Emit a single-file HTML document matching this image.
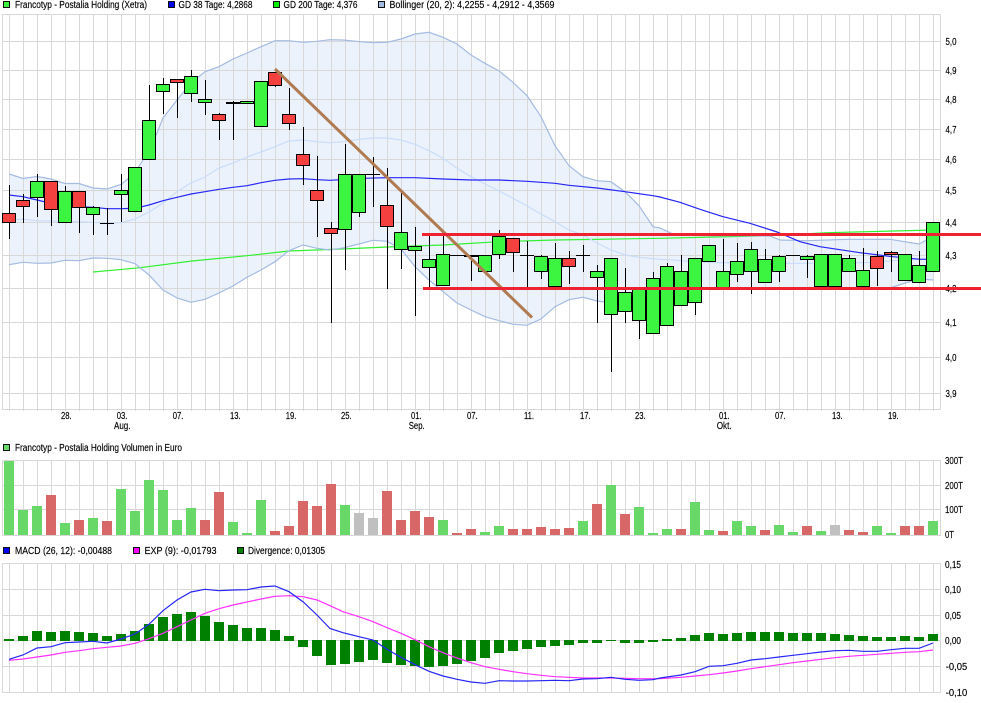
<!DOCTYPE html>
<html><head><meta charset="utf-8"><title>Chart</title>
<style>
html,body{margin:0;padding:0;background:#fff}
svg{display:block}
text{font-family:"Liberation Sans",sans-serif;font-size:10px;fill:#000;stroke:#000;stroke-width:.15px}
</style></head><body>
<svg width="981" height="703" viewBox="0 0 981 703" xmlns="http://www.w3.org/2000/svg">
<defs><pattern id="v" x="9" y="0" width="14" height="10" patternUnits="userSpaceOnUse"><rect width="1" height="10" fill="#d8d8d8"/></pattern></defs>
<rect width="981" height="703" fill="#fff"/>

<!-- Bollinger fill -->
<path fill="#cfdff8" fill-opacity=".42" d="M9 174L23 178.5 37 176.5 51 179 65 183.5 79 183.5 93 188 107 189 121 184.5 135 173 149 150 157 133 163 118 177 100 191 83 205 71.7 219 66.7 233 59 247 53 261 46.7 275 40.7 289 40.7 303 42.3 317 41.3 330 39.7 343 40 360 41.7 373 42.7 387 42.3 401 39 415 34 429 32.3 443 37.3 457 44 471 55 485 63.3 499 71 513 82.3 527 95.7 541 116.7 555 145.7 569 165.7 583 176.7 597 180.7 611 181.7 625 191.7 639 205.7 653 226.7 660 228 673 234 700 235.5 770 236 780 240 807 240.7 848 239.3 890 239.3 919 244 933 236.7L933 280 919 279 905 283 890 288 681 288 667 290 653 292 639 298 625 302 611 303 597 301 583 297.3 569 299.7 555 306.7 541 319 527 325.3 513 324.3 499 320.7 485 316.7 471 310 457 303 443 291.7 429 280 415 266.7 401 249 387 241.3 373 240.3 359 244 343 248 330 250 317 248.3 303 245 289 250.7 275 261.7 261 270 247 277.3 233 286 219 293 205 299.3 191 302.3 177 298 163 290 149 275 135 263.7 121 259.7 107 258.3 93 258 79 260.7 65 260.3 51 263 37 263.3 23 262.3 9 264.7Z"/>

<!-- grids -->
<g fill="url(#v)">
<rect x="9" y="14" width="925" height="397"/>
<rect x="9" y="460" width="925" height="75"/>
<rect x="9" y="563" width="925" height="129"/>
</g>
<path stroke="#d8d8d8" fill="none" shape-rendering="crispEdges" d="M2.5 14V410M940.5 14V410M2 14.5H941M2 41.5H941M2 70.5H941M2 99.5H941M2 129.5H941M2 159.5H941M2 190.5H941M2 222.5H941M2 255.5H941M2 288.5H941M2 322.5H941M2 357.5H941M2 393.5H941M2 409.5H941
M2.5 460V535M940.5 460V535M2 460.5H941M2 485.5H941M2 509.5H941M2 535.5H941
M2.5 563V693M940.5 563V693M2 563.5H941M2 589.5H941M2 615.5H941M2 640.5H941M2 666.5H941M2 692.5H941"/>

<!-- GD200 -->
<polyline fill="none" stroke="#30f030" stroke-width="1.2" points="93,272 140,267.7 192,261 247,255.7 289,251 330,249.5 387,247 443,245 499,241.7 555,240 660,238.3 770,235.7 827,232.7 933,230"/>
<!-- Bollinger lines -->
<polyline fill="none" stroke="#a4bbe2" stroke-width="1.2" points="9,174 23,178.5 37,176.5 51,179 65,183.5 79,183.5 93,188 107,189 121,184.5 135,173 149,150 157,133 163,118 177,100 191,83 205,71.7 219,66.7 233,59 247,53 261,46.7 275,40.7 289,40.7 303,42.3 317,41.3 330,39.7 343,40 360,41.7 373,42.7 387,42.3 401,39 415,34 429,32.3 443,37.3 457,44 471,55 485,63.3 499,71 513,82.3 527,95.7 541,116.7 555,145.7 569,165.7 583,176.7 597,180.7 611,181.7 625,191.7 639,205.7 653,226.7 660,228 673,234 700,235.5 770,236 780,240 807,240.7 848,239.3 890,239.3 919,244 933,236.7"/>
<polyline fill="none" stroke="#a4bbe2" stroke-width="1.2" points="9,264.7 23,262.3 37,263.3 51,263 65,260.3 79,260.7 93,258 107,258.3 121,259.7 135,263.7 149,275 163,290 177,298 191,302.3 205,299.3 219,293 233,286 247,277.3 261,270 275,261.7 289,250.7 303,245 317,248.3 330,250 343,248 359,244 373,240.3 387,241.3 401,249 415,266.7 429,280 443,291.7 457,303 471,310 485,316.7 499,320.7 513,324.3 527,325.3 541,319 555,306.7 569,299.7 583,297.3 597,301 611,303 625,302 639,298 653,292 667,290 681,288 890,288 905,283 919,279 933,280"/>
<polyline fill="none" stroke="#c9dcf9" stroke-width="1.2" points="9,219.7 23,219.3 37,220.7 51,221 65,221.7 79,221.7 93,222.3 107,223 121,222.7 135,219 149,212 163,203 177,191.7 191,183 205,177 219,168 233,163 247,157 261,152 275,146.7 289,141 303,140 317,141.7 330,142.7 343,141.7 360,139.3 373,138 387,138 401,140 415,144.3 429,150.7 443,158.3 457,168.3 471,176.7 485,184 499,191 513,198.3 527,206 541,214 555,221.7 569,230 583,235 597,243 611,250 625,255 639,257.3 660,259.3 673,260 693,261.7 723,262.7 753,263.3 793,263.3 827,263.3 877,262.3 900,260 923,259 933,259"/>
<!-- GD38 -->
<polyline fill="none" stroke="#2626f5" stroke-width="1.2" points="9,195 23,196.7 37,200 51,203.3 65,205 79,206.7 93,207.3 107,208.7 121,208.7 135,208.3 149,205 163,200.7 177,197.3 191,194 205,191.7 219,189.3 233,187.3 247,185.7 261,182.7 275,180.3 289,179 303,178.7 317,179.7 330,180.3 363,178.3 387,177.7 415,177.7 443,179 471,180 499,180 527,181.3 555,183.3 569,185.3 597,188 625,191.7 653,195.7 660,197 680,202.3 700,209.3 723,216.7 750,223.3 777,232 800,241.7 820,246.7 860,252.7 893,256.7 920,259.3 933,259.3"/>

<!-- wicks -->
<path stroke="#000" fill="none" shape-rendering="crispEdges" d="M9.5 185V239M23.5 194V223M37.5 174V217M51.5 181V226M65.5 186V222M79.5 191V233M93.5 206V235M107.5 208V235M121.5 174V222M149.5 85V159M163.5 78V114M177.5 79V118M191.5 70V102M205.5 80V115M219.5 113V140M233.5 101V140M275.5 72V87M289.5 88V130M303.5 127V185M317.5 156V237M331.5 222V323M345.5 144V270M359.5 174V217M373.5 157V207M387.5 168V289M401.5 193V269M415.5 227V316M429.5 236V288M443.5 236V254M471.5 256V281M499.5 230V259M513.5 238V272M527.5 241V287M541.5 255V279M555.5 243V258M569.5 251V284M583.5 245V272M597.5 265V323M611.5 258V372M625.5 268V323M639.5 288V339M653.5 272V278M667.5 263V270M681.5 255V271M695.5 258V315M723.5 239V271M737.5 243V282M751.5 242V294M765.5 249V260M779.5 255V282M807.5 255V278M849.5 255V258M863.5 248V270M877.5 251V286M891.5 251V272M919.5 251V265"/>
<!-- dojis -->
<path stroke="#000" fill="none" shape-rendering="crispEdges" d="M100 223.5h14M366 174.5h14M450 255.5h14M520 255.5h14M576 255.5h14M786 255.5h14"/>
<rect x="226" y="102" width="14" height="2" fill="#000"/>
<!-- green bodies -->
<path fill="#3cf540" stroke="#000" shape-rendering="crispEdges" d="M30.5 181.5h13v16h-13zM58.5 191.5h13v31h-13zM86.5 207.5h13v7h-13zM114.5 190.5h13v4h-13zM128.5 167.5h13v44h-13zM142.5 120.5h13v39h-13zM156.5 84.5h13v7h-13zM184.5 76.5h13v17h-13zM198.5 99.5h13v3h-13zM240.5 101.5h13v2h-13zM254.5 81.5h13v45h-13zM338.5 174.5h13v55h-13zM352.5 174.5h13v38h-13zM394.5 232.5h13v17h-13zM408.5 246.5h13v4h-13zM422.5 259.5h13v8h-13zM436.5 254.5h13v31h-13zM464.5 255.5h13v1h-13zM478.5 255.5h13v16h-13zM492.5 236.5h13v18h-13zM534.5 256.5h13v15h-13zM548.5 258.5h13v28h-13zM590.5 271.5h13v6h-13zM604.5 258.5h13v56h-13zM618.5 292.5h13v19h-13zM632.5 287.5h13v33h-13zM646.5 278.5h13v55h-13zM660.5 266.5h13v59h-13zM674.5 271.5h13v34h-13zM688.5 258.5h13v44h-13zM702.5 245.5h13v16h-13zM716.5 271.5h13v17h-13zM730.5 261.5h13v13h-13zM744.5 249.5h13v22h-13zM758.5 259.5h13v23h-13zM772.5 256.5h13v15h-13zM800.5 256.5h13v3h-13zM814.5 254.5h13v32h-13zM828.5 254.5h13v32h-13zM842.5 258.5h13v13h-13zM856.5 270.5h13v16h-13zM898.5 254.5h13v26h-13zM912.5 265.5h13v17h-13zM926.5 222.5h13v49h-13z"/>
<!-- red bodies -->
<path fill="#f54040" stroke="#000" shape-rendering="crispEdges" d="M2.5 213.5h13v9h-13zM16.5 200.5h13v6h-13zM44.5 181.5h13v28h-13zM72.5 191.5h13v16h-13zM170.5 79.5h13v3h-13zM212.5 114.5h13v6h-13zM268.5 72.5h13v13h-13zM282.5 114.5h13v9h-13zM296.5 154.5h13v11h-13zM310.5 190.5h13v10h-13zM324.5 228.5h13v5h-13zM380.5 205.5h13v21h-13zM506.5 238.5h13v14h-13zM562.5 258.5h13v8h-13zM870.5 256.5h13v12h-13zM884.5 252.5h13v2h-13z"/>

<!-- axis labels -->
<g lengthAdjust="spacingAndGlyphs">
<text x="945.5" y="45" textLength="11" lengthAdjust="spacingAndGlyphs">5,0</text><text x="945.5" y="74" textLength="11" lengthAdjust="spacingAndGlyphs">4,9</text><text x="945.5" y="103" textLength="11" lengthAdjust="spacingAndGlyphs">4,8</text><text x="945.5" y="133" textLength="11" lengthAdjust="spacingAndGlyphs">4,7</text><text x="945.5" y="163" textLength="11" lengthAdjust="spacingAndGlyphs">4,6</text><text x="945.5" y="194" textLength="11" lengthAdjust="spacingAndGlyphs">4,5</text><text x="945.5" y="226" textLength="11" lengthAdjust="spacingAndGlyphs">4,4</text><text x="945.5" y="259" textLength="11" lengthAdjust="spacingAndGlyphs">4,3</text><text x="945.5" y="292" textLength="11" lengthAdjust="spacingAndGlyphs">4,2</text><text x="945.5" y="326" textLength="11" lengthAdjust="spacingAndGlyphs">4,1</text><text x="945.5" y="361" textLength="11" lengthAdjust="spacingAndGlyphs">4,0</text><text x="945.5" y="397" textLength="11" lengthAdjust="spacingAndGlyphs">3,9</text>
</g>

<!-- trend lines -->
<line x1="275" y1="69" x2="532" y2="317.5" stroke="#b07a52" stroke-width="3"/>
<rect x="422" y="233" width="559" height="3" fill="#ee2230"/>
<rect x="423" y="287" width="558" height="3" fill="#ee2230"/>

<!-- legend top -->
<rect x="3.5" y="1.5" width="6" height="6" fill="#40f040" stroke="#111" shape-rendering="crispEdges"/>
<text x="15" y="8" textLength="132" lengthAdjust="spacingAndGlyphs">Francotyp - Postalia Holding (Xetra)</text>
<rect x="168.5" y="1.5" width="6" height="6" fill="#0000ee" stroke="#111" shape-rendering="crispEdges"/>
<text x="178.5" y="8" textLength="74" lengthAdjust="spacingAndGlyphs">GD 38 Tage: 4,2868</text>
<rect x="273.5" y="1.5" width="6" height="6" fill="#00ee00" stroke="#111" shape-rendering="crispEdges"/>
<text x="283.5" y="8" textLength="74" lengthAdjust="spacingAndGlyphs">GD 200 Tage: 4,376</text>
<rect x="378.5" y="1.5" width="6" height="6" fill="#a4bbe2" stroke="#111" shape-rendering="crispEdges"/>
<text x="389.5" y="8" textLength="165" lengthAdjust="spacingAndGlyphs">Bollinger (20, 2): 4,2255 - 4,2912 - 4,3569</text>

<!-- date labels -->
<text x="61" y="419" textLength="10.7" lengthAdjust="spacingAndGlyphs">28.</text><text x="116.7" y="419" textLength="10.7" lengthAdjust="spacingAndGlyphs">03.</text><text x="172.7" y="419" textLength="10.7" lengthAdjust="spacingAndGlyphs">07.</text><text x="230" y="419" textLength="10.7" lengthAdjust="spacingAndGlyphs">13.</text><text x="285.7" y="419" textLength="10.7" lengthAdjust="spacingAndGlyphs">19.</text><text x="341" y="419" textLength="10.7" lengthAdjust="spacingAndGlyphs">25.</text><text x="411" y="419" textLength="10.7" lengthAdjust="spacingAndGlyphs">01.</text><text x="467" y="419" textLength="10.7" lengthAdjust="spacingAndGlyphs">07.</text><text x="524" y="419" textLength="10" lengthAdjust="spacingAndGlyphs">11.</text><text x="580" y="419" textLength="10.7" lengthAdjust="spacingAndGlyphs">17.</text><text x="635" y="419" textLength="10.7" lengthAdjust="spacingAndGlyphs">23.</text><text x="719" y="419" textLength="10.7" lengthAdjust="spacingAndGlyphs">01.</text><text x="775" y="419" textLength="10.7" lengthAdjust="spacingAndGlyphs">07.</text><text x="832" y="419" textLength="10.7" lengthAdjust="spacingAndGlyphs">13.</text><text x="888" y="419" textLength="10.7" lengthAdjust="spacingAndGlyphs">19.</text>
<text x="114" y="429" textLength="16.5" lengthAdjust="spacingAndGlyphs">Aug.</text><text x="408.7" y="429" textLength="16" lengthAdjust="spacingAndGlyphs">Sep.</text><text x="716.7" y="429" textLength="15" lengthAdjust="spacingAndGlyphs">Okt.</text>

<!-- volume -->
<rect x="3.5" y="444.5" width="6" height="6" fill="#68d868" stroke="#111" shape-rendering="crispEdges"/>
<text x="15" y="451" textLength="167" lengthAdjust="spacingAndGlyphs">Francotyp - Postalia Holding Volumen in Euro</text>
<g fill="#68d868">
<rect x="4" y="461" width="10" height="74"/><rect x="18" y="510" width="10" height="25"/><rect x="32" y="506" width="10" height="29"/><rect x="60" y="523" width="10" height="12"/><rect x="88" y="518" width="10" height="17"/><rect x="116" y="489" width="10" height="46"/><rect x="130" y="511" width="10" height="24"/><rect x="144" y="480" width="10" height="55"/><rect x="158" y="490" width="10" height="45"/><rect x="172" y="520" width="10" height="15"/><rect x="186" y="508" width="10" height="27"/><rect x="228" y="522" width="10" height="13"/><rect x="242" y="533" width="10" height="2"/><rect x="256" y="500" width="10" height="35"/><rect x="340" y="505" width="10" height="30"/><rect x="438" y="520" width="10" height="15"/><rect x="480" y="532" width="10" height="3"/><rect x="494" y="526" width="10" height="9"/><rect x="578" y="521" width="10" height="14"/><rect x="606" y="485" width="10" height="50"/><rect x="634" y="507" width="10" height="28"/><rect x="648" y="533" width="10" height="2"/><rect x="662" y="529" width="10" height="6"/><rect x="690" y="502" width="10" height="33"/><rect x="704" y="530" width="10" height="5"/><rect x="732" y="521" width="10" height="14"/><rect x="746" y="526" width="10" height="9"/><rect x="774" y="525" width="10" height="10"/><rect x="788" y="532" width="10" height="3"/><rect x="816" y="531" width="10" height="4"/><rect x="872" y="526" width="10" height="9"/><rect x="886" y="533" width="10" height="2"/><rect x="928" y="521" width="10" height="14"/>
</g>
<g fill="#d86868">
<rect x="46" y="495" width="10" height="40"/><rect x="74" y="520" width="10" height="15"/><rect x="102" y="521" width="10" height="14"/><rect x="200" y="520" width="10" height="15"/><rect x="214" y="492" width="10" height="43"/><rect x="270" y="531" width="10" height="4"/><rect x="284" y="526" width="10" height="9"/><rect x="298" y="501" width="10" height="34"/><rect x="312" y="506" width="10" height="29"/><rect x="326" y="484" width="10" height="51"/><rect x="382" y="491" width="10" height="44"/><rect x="396" y="520" width="10" height="15"/><rect x="410" y="511" width="10" height="24"/><rect x="424" y="517" width="10" height="18"/><rect x="452" y="533" width="10" height="2"/><rect x="466" y="529" width="10" height="6"/><rect x="508" y="529" width="10" height="6"/><rect x="522" y="529" width="10" height="6"/><rect x="536" y="527" width="10" height="8"/><rect x="550" y="529" width="10" height="6"/><rect x="564" y="528" width="10" height="7"/><rect x="592" y="504" width="10" height="31"/><rect x="620" y="514" width="10" height="21"/><rect x="676" y="529" width="10" height="6"/><rect x="718" y="531" width="10" height="4"/><rect x="760" y="530" width="10" height="5"/><rect x="802" y="526" width="10" height="9"/><rect x="844" y="530" width="10" height="5"/><rect x="858" y="532" width="10" height="3"/><rect x="900" y="526" width="10" height="9"/><rect x="914" y="526" width="10" height="9"/>
</g>
<g fill="#c0c0c0"><rect x="354" y="513" width="10" height="22"/><rect x="368" y="518" width="10" height="17"/><rect x="830" y="525" width="10" height="10"/></g>
<text x="945" y="464" textLength="18" lengthAdjust="spacingAndGlyphs">300T</text><text x="945" y="489" textLength="18" lengthAdjust="spacingAndGlyphs">200T</text><text x="945" y="513" textLength="18" lengthAdjust="spacingAndGlyphs">100T</text><text x="945" y="538" textLength="9" lengthAdjust="spacingAndGlyphs">0T</text>

<!-- MACD legend -->
<rect x="3.5" y="547.5" width="6" height="6" fill="#0000ee" stroke="#111" shape-rendering="crispEdges"/>
<text x="15" y="554" textLength="97" lengthAdjust="spacingAndGlyphs">MACD (26, 12): -0,00488</text>
<rect x="133.5" y="547.5" width="6" height="6" fill="#ff00ff" stroke="#111" shape-rendering="crispEdges"/>
<text x="144.5" y="554" textLength="72" lengthAdjust="spacingAndGlyphs">EXP (9): -0,01793</text>
<rect x="237.5" y="547.5" width="6" height="6" fill="#008000" stroke="#111" shape-rendering="crispEdges"/>
<text x="248" y="554" textLength="77" lengthAdjust="spacingAndGlyphs">Divergence: 0,01305</text>

<!-- MACD bars -->
<g fill="#008000">
<rect x="4" y="639" width="10" height="2"/><rect x="18" y="636" width="10" height="5"/><rect x="32" y="631" width="10" height="10"/><rect x="46" y="632" width="10" height="9"/><rect x="60" y="631" width="10" height="10"/><rect x="74" y="632" width="10" height="9"/><rect x="88" y="633" width="10" height="8"/><rect x="102" y="636" width="10" height="5"/><rect x="116" y="634" width="10" height="7"/><rect x="130" y="631" width="10" height="10"/><rect x="144" y="624" width="10" height="17"/><rect x="158" y="617" width="10" height="24"/><rect x="172" y="614" width="10" height="27"/><rect x="186" y="612" width="10" height="29"/><rect x="200" y="616" width="10" height="25"/><rect x="214" y="622" width="10" height="19"/><rect x="228" y="625" width="10" height="16"/><rect x="242" y="628" width="10" height="13"/><rect x="256" y="628" width="10" height="13"/><rect x="270" y="630" width="10" height="11"/><rect x="284" y="636" width="10" height="5"/>
<rect x="298" y="640" width="10" height="7"/><rect x="312" y="640" width="10" height="16"/><rect x="326" y="640" width="10" height="25"/><rect x="340" y="640" width="10" height="24"/><rect x="354" y="640" width="10" height="22"/><rect x="368" y="640" width="10" height="20"/><rect x="382" y="640" width="10" height="23"/><rect x="396" y="640" width="10" height="25"/><rect x="410" y="640" width="10" height="26"/><rect x="424" y="640" width="10" height="27"/><rect x="438" y="640" width="10" height="26"/><rect x="452" y="640" width="10" height="24"/><rect x="466" y="640" width="10" height="21"/><rect x="480" y="640" width="10" height="18"/><rect x="494" y="640" width="10" height="13"/><rect x="508" y="640" width="10" height="11"/><rect x="522" y="640" width="10" height="9"/><rect x="536" y="640" width="10" height="7"/><rect x="550" y="640" width="10" height="6"/><rect x="564" y="640" width="10" height="5"/><rect x="578" y="640" width="10" height="3"/><rect x="592" y="640" width="10" height="3"/><rect x="606" y="640" width="10" height="1"/><rect x="620" y="640" width="10" height="3"/><rect x="634" y="640" width="10" height="3"/><rect x="648" y="640" width="10" height="2"/>
<rect x="662" y="639" width="10" height="2"/><rect x="676" y="638" width="10" height="3"/><rect x="690" y="635" width="10" height="6"/><rect x="704" y="633" width="10" height="8"/><rect x="718" y="634" width="10" height="7"/><rect x="732" y="633" width="10" height="8"/><rect x="746" y="632" width="10" height="9"/><rect x="760" y="632" width="10" height="9"/><rect x="774" y="632" width="10" height="9"/><rect x="788" y="633" width="10" height="8"/><rect x="802" y="633" width="10" height="8"/><rect x="816" y="633" width="10" height="8"/><rect x="830" y="634" width="10" height="7"/><rect x="844" y="635" width="10" height="6"/><rect x="858" y="636" width="10" height="5"/><rect x="872" y="637" width="10" height="4"/><rect x="886" y="637" width="10" height="4"/><rect x="900" y="636" width="10" height="5"/><rect x="914" y="637" width="10" height="4"/><rect x="928" y="634" width="10" height="7"/>
</g>
<!-- EXP -->
<polyline fill="none" stroke="#ff30ff" stroke-width="1.2" points="9,660.3 23,659 37,657 51,655 65,652.3 79,650.7 93,648.7 107,647.3 121,646 135,643.3 149,638.7 163,633.3 177,626.7 191,620 205,613.3 219,608.7 233,605 247,602 261,599 275,596.3 289,595.7 303,596.7 317,600 330,605.7 343,611.7 359,616.7 373,621.7 387,627.7 401,633.3 415,639.7 429,646.7 443,652.7 457,658 471,662.7 485,666.7 499,669.3 513,671.7 527,673.7 541,675.3 555,676.7 569,677.3 583,678 597,678 611,678 625,678.3 639,678.7 653,678.7 660,678.7 681,677.3 695,676 709,674.7 723,673 737,671 751,668.7 765,666.7 779,664.7 793,662.7 807,661 821,659.3 835,657.7 849,656.3 863,655.3 877,654.3 891,653.3 905,652.3 919,651.7 933,650"/>
<!-- MACD -->
<polyline fill="none" stroke="#2626f5" stroke-width="1.2" points="9,659.3 23,655 37,648 51,646.7 65,642.7 79,642 93,641.3 107,643 121,639 135,634 149,624.3 163,610.7 177,600 191,592 205,589.3 219,590.7 233,590 247,589.7 261,587 275,586 289,591.7 303,601.7 317,615 330,628.5 343,632.7 359,636.7 373,640 387,649.3 401,657.3 415,664.7 429,671.3 443,676 457,679.3 471,682 485,683.3 499,680.7 513,681 527,681 541,680.7 555,680.3 569,680.7 583,679 597,678.7 611,677.3 625,679.3 639,680.3 653,679.7 660,678 681,675 695,671.7 709,666.3 723,665.7 737,663.3 751,660 765,658.7 779,657 793,655.3 807,653.7 821,652 835,650.7 849,650.3 863,651.3 877,651.3 891,649.7 905,648.3 919,648.3 933,643"/>
<text x="945" y="568" textLength="16" lengthAdjust="spacingAndGlyphs">0,15</text><text x="945" y="593" textLength="16" lengthAdjust="spacingAndGlyphs">0,10</text><text x="945" y="619" textLength="16" lengthAdjust="spacingAndGlyphs">0,05</text><text x="945" y="644" textLength="16" lengthAdjust="spacingAndGlyphs">0,00</text><text x="945.7" y="670" textLength="21.5" lengthAdjust="spacingAndGlyphs">-0,05</text><text x="945.7" y="696" textLength="21.5" lengthAdjust="spacingAndGlyphs">-0,10</text>
</svg>
</body></html>
